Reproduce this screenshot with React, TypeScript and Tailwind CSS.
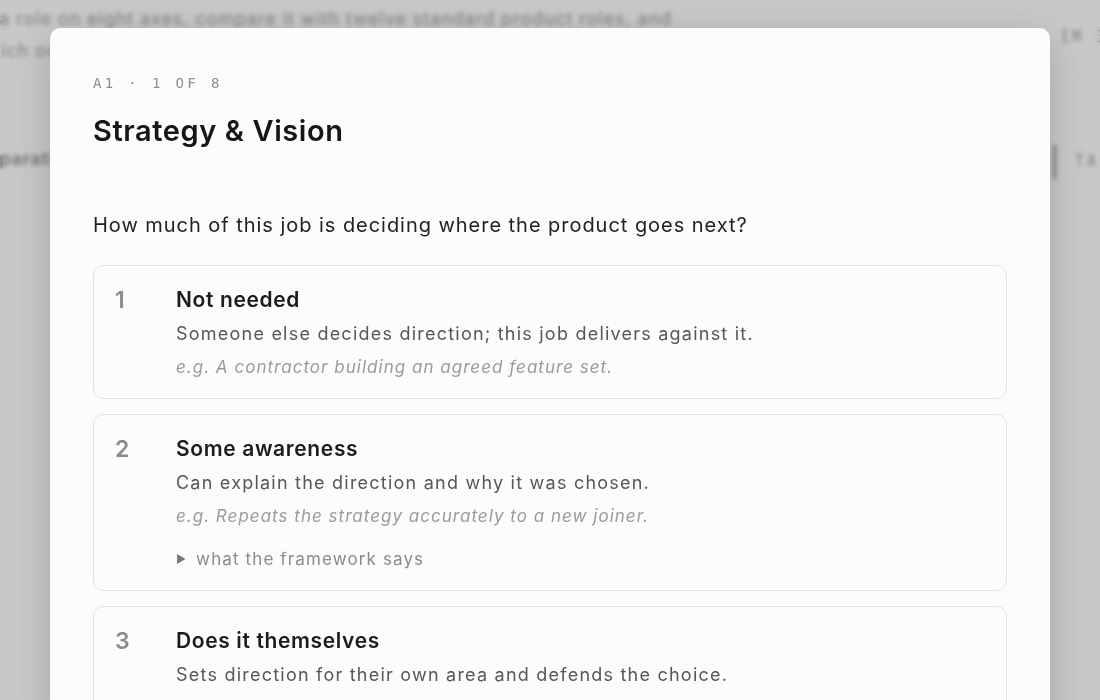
import React from 'react'

const LEVELS = [
  {
    n: 1,
    title: 'Not needed',
    desc: 'Someone else decides direction; this job delivers against it.',
    example: 'e.g. A contractor building an agreed feature set.',
    details: false,
  },
  {
    n: 2,
    title: 'Some awareness',
    desc: 'Can explain the direction and why it was chosen.',
    example: 'e.g. Repeats the strategy accurately to a new joiner.',
    details: true,
  },
  {
    n: 3,
    title: 'Does it themselves',
    desc: 'Sets direction for their own area and defends the choice.',
    example: 'e.g. Writes the quarterly plan for a product line.',
    details: true,
  },
]

const sans = "font-['Inter','Noto_Sans',sans-serif]"
const mono = "font-['DejaVu_Sans_Mono','Liberation_Mono',monospace]"

function LevelCard({ level }: { level: (typeof LEVELS)[number] }) {
  return (
    <div className="flex rounded-[10px] border border-[#e3e3e1] bg-[#fcfcfb] pl-[21px] pr-6 pt-5 pb-[18px]">
      <div className="w-[61px] shrink-0 text-[23px] leading-[28px] font-semibold text-[#8c8c8a]">{level.n}</div>
      <div className="flex flex-col">
        <div className="text-[21px] leading-[28px] font-semibold tracking-[0.03em] text-[#1c1c1c]">{level.title}</div>
        <div className="mt-[6px] text-[18px] leading-[28px] tracking-[0.068em] text-[#575757]">{level.desc}</div>
        <div className="mt-[6px] text-[17px] leading-[26px] italic tracking-[0.06em] text-[#9a9a98]">{level.example}</div>
        {level.details && (
          <div className="mt-[17px] flex items-center gap-[10px] text-[17px] leading-[26px] tracking-[0.066em] text-[#8a8a88]">
            <span className="text-[11px] tracking-normal text-[#777]">▶</span>
            what the framework says
          </div>
        )}
      </div>
    </div>
  )
}

export default function App() {
  return (
    <div className={`relative h-[700px] w-[1100px] overflow-hidden bg-[#fafaf9] ${sans}`}>
      {/* page behind the dialog */}
      <div className="flex">
        <div className="-ml-[18px] w-[1076px] shrink-0 pt-[3px] text-[18px] leading-[32px] tracking-[0.05em] text-[#a6a6a6]">
          <p className="whitespace-nowrap">e a role on eight axes, compare it with twelve standard product roles, and</p>
          <p className="-ml-[8px] whitespace-nowrap">which one it sits closest to.</p>
          <div className="-ml-[26px] mt-[76px] whitespace-nowrap text-[18px] font-semibold text-[#929292]">Comparative view</div>
        </div>
        <div className={`flex shrink-0 flex-col pt-[26px] ${mono} text-[15px] text-[#a4a4a4]`}>
          <span className="ml-[2px] whitespace-nowrap tracking-[0.2em]">IM 3</span>
          <div className="mt-[96px] flex items-center">
            <span className="-ml-[5px] h-[34px] w-[3px] bg-[#9c9c9c]" />
            <span className="ml-[19px] whitespace-nowrap tracking-[0.2em]">TAB</span>
          </div>
        </div>
      </div>

      {/* overlay */}
      <div className="absolute inset-0 bg-[#000]/20 backdrop-blur-[2px]">
        <div className="ml-[50px] mt-[28px] w-[1000px] rounded-t-[10px] bg-[#fcfcfb] px-[43px] pt-[45px] shadow-[0_10px_40px_rgba(0,0,0,0.18)]">
          <div className={`${mono} text-[14px] leading-[20px] tracking-[0.24em] text-[#8e8e8c]`}>A1 · 1 OF 8</div>
          <h2 className="mt-5 text-[29px] leading-[36px] font-semibold tracking-[0.02em] text-[#161616]">Strategy &amp; Vision</h2>
          <p className="mt-[62px] text-[20px] leading-[28px] tracking-[0.048em] text-[#222]">
            How much of this job is deciding where the product goes next?
          </p>
          <div className="mt-[26px] flex flex-col gap-[15px] pb-10">
            {LEVELS.map(l => (
              <LevelCard key={l.n} level={l} />
            ))}
          </div>
        </div>
      </div>
    </div>
  )
}
